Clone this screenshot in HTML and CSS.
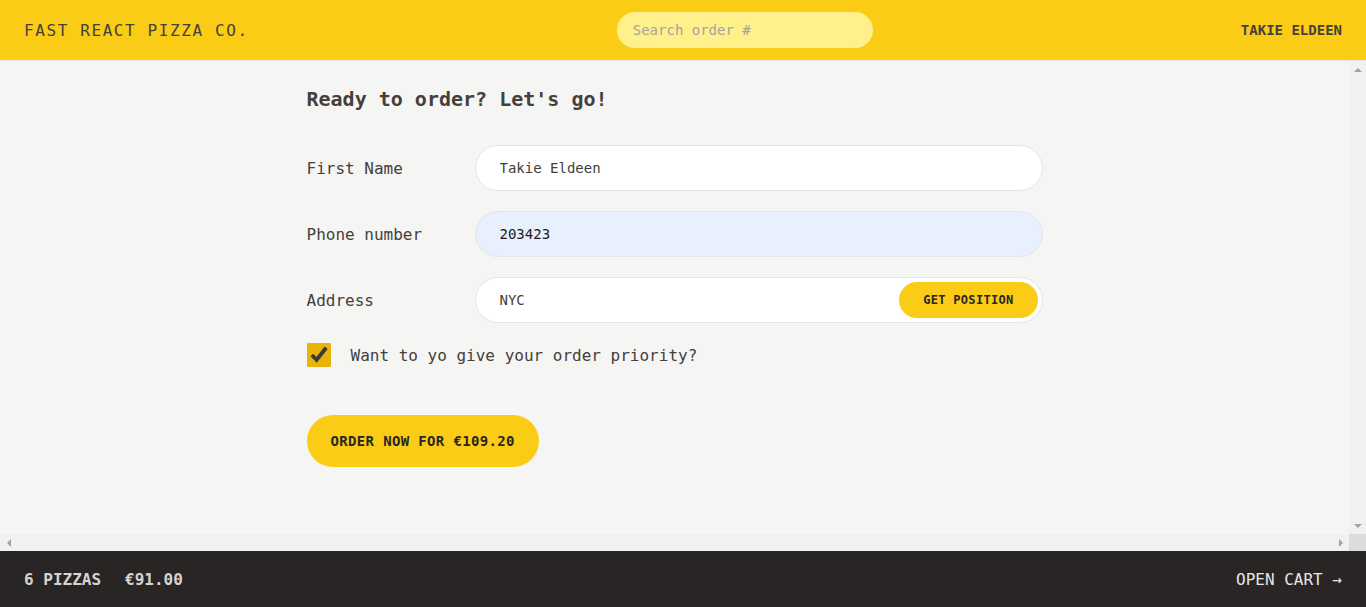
FILE: index.html
```html
<!DOCTYPE html>
<html lang="en">
<head>
<meta charset="utf-8">
<title>Fast React Pizza Co.</title>
<link rel="stylesheet" href="styles.css">
</head>
<body>
<div class="app">
  <header class="header">
    <a class="logo" href="#">Fast React Pizza Co.</a>
    <form class="search-form">
      <input class="search" type="text" placeholder="Search order #">
    </form>
    <div class="username">Takie Eldeen</div>
  </header>

  <div class="viewport">
    <main class="main">
      <div class="container">
        <div class="page">
          <h2 class="title">Ready to order? Let's go!</h2>
          <form class="order-form">
            <div class="row">
              <label class="label">First Name</label>
              <input class="input" type="text" value="Takie Eldeen">
            </div>
            <div class="row">
              <label class="label">Phone number</label>
              <input class="input input-autofill" type="tel" value="203423">
            </div>
            <div class="row">
              <label class="label">Address</label>
              <div class="field">
                <input class="input" type="text" value="NYC">
                <button type="button" class="btn btn-small">Get Position</button>
              </div>
            </div>
            <div class="check-row">
              <input class="checkbox" type="checkbox" id="priority" checked>
              <label class="check-label" for="priority">Want to yo give your order priority?</label>
            </div>
            <button type="button" class="btn btn-primary">Order now for €109.20</button>
          </form>
        </div>
      </div>
    </main>
    <div class="vbar" aria-hidden="true">
      <span class="sb-btn"><span class="arrow arrow-up"></span></span>
      <span class="sb-btn"><span class="arrow arrow-down"></span></span>
    </div>
    <div class="hbar" aria-hidden="true">
      <span class="sb-btn"><span class="arrow arrow-left"></span></span>
      <span class="sb-btn"><span class="arrow arrow-right"></span></span>
    </div>
    <div class="corner" aria-hidden="true"></div>
  </div>

  <footer class="cart-bar">
    <p class="cart-summary">
      <span class="cart-count">6 pizzas</span>
      <span class="cart-price">€91.00</span>
    </p>
    <a class="cart-link" href="#">Open cart &rarr;</a>
  </footer>
</div>
</body>
</html>
```

FILE: styles.css
```css
* { box-sizing: border-box; margin: 0; padding: 0; }

html, body { height: 100%; }

body {
  font-family: "DejaVu Sans Mono", "Liberation Mono", monospace;
  color: #44403c;
  background: #f5f5f4;
}

.app {
  display: grid;
  grid-template-rows: auto 1fr auto;
  height: 100vh;
}

/* Header */
.header {
  display: flex;
  align-items: center;
  justify-content: space-between;
  background: #facc15;
  border-bottom: 1px solid #e7e5e4;
  padding: 12px 24px;
  height: 61px;
}

.logo {
  color: #44403c;
  text-decoration: none;
  text-transform: uppercase;
  letter-spacing: 0.1em;
  font-size: 16px;
  line-height: 24px;
  padding-top: 2px;
}

.search {
  width: 256px;
  height: 36px;
  border: none;
  border-radius: 9999px;
  background: #fef08a;
  padding: 8px 16px;
  font-family: inherit;
  font-size: 14px;
  line-height: 20px;
  color: #44403c;
  outline: none;
}
.search::placeholder { color: #a8a29e; }

.username {
  font-size: 14px;
  line-height: 20px;
  font-weight: 600;
  text-transform: uppercase;
  color: #44403c;
}

/* Scroll viewport with classic scrollbars */
.viewport {
  display: grid;
  grid-template-columns: 1fr 17px;
  grid-template-rows: 1fr 17px;
  min-height: 0;
}

.main {
  overflow: hidden;
  min-height: 0;
}

.vbar,
.hbar {
  display: flex;
  justify-content: space-between;
  background: #f1f1f1;
}
.vbar { flex-direction: column; }

.sb-btn {
  display: flex;
  align-items: center;
  justify-content: center;
  width: 17px;
  height: 17px;
}

.arrow {
  width: 0;
  height: 0;
  border: 4px solid transparent;
}
.arrow-up { border-bottom-color: #a3a3a3; border-top-width: 0; }
.arrow-down { border-top-color: #a3a3a3; border-bottom-width: 0; }
.arrow-left { border-right-color: #a3a3a3; border-left-width: 0; }
.arrow-right { border-left-color: #a3a3a3; border-right-width: 0; }

.corner { background: #dcdcdc; }

.container {
  max-width: 768px;
  margin: 0 auto;
}

.page {
  padding: 24px 16px;
}

.title {
  font-size: 20px;
  line-height: 28px;
  font-weight: 600;
  margin-bottom: 32px;
}

.row {
  display: flex;
  align-items: center;
  gap: 8px;
  margin-bottom: 20px;
}

.label {
  flex: 0 0 160px;
  font-size: 16px;
  line-height: 24px;
  padding-top: 1px;
}

.input {
  flex: 1 1 auto;
  width: 100%;
  height: 46px;
  border: 1px solid #e7e5e4;
  border-radius: 9999px;
  background: #fff;
  padding: 12px 24px;
  font-family: inherit;
  font-size: 14px;
  line-height: 20px;
  color: #44403c;
  outline: none;
}

.input-autofill {
  background: #e8f0fe;
  color: #1c1917;
}

.field {
  position: relative;
  flex: 1 1 auto;
  display: flex;
}

.btn {
  display: inline-block;
  border: none;
  border-radius: 9999px;
  background: #facc15;
  color: #292524;
  font-family: inherit;
  font-weight: 600;
  text-transform: uppercase;
  letter-spacing: 0.025em;
  cursor: pointer;
}

.btn-small {
  position: absolute;
  top: 5px;
  right: 5px;
  height: 36px;
  padding: 10px 24px;
  font-size: 12px;
  line-height: 16px;
}

.check-row {
  display: flex;
  align-items: center;
  gap: 20px;
  height: 24px;
  margin-bottom: 48px;
}

.checkbox {
  width: 24px;
  height: 24px;
  margin: 0;
  accent-color: #eab308;
}

.check-label {
  font-size: 16px;
  line-height: 24px;
  font-weight: 500;
  padding-top: 1px;
}

.btn-primary {
  height: 52px;
  padding: 16px 24px;
  font-size: 14px;
  line-height: 20px;
}

/* Footer */
.cart-bar {
  display: flex;
  align-items: center;
  justify-content: space-between;
  height: 56px;
  background: #292524;
  color: #e7e5e4;
  padding: 16px 24px;
  text-transform: uppercase;
  font-size: 16px;
  line-height: 24px;
}

.cart-summary {
  display: flex;
  gap: 24px;
  font-weight: 600;
  color: #d6d3d1;
  padding-top: 2px;
}

.cart-link {
  color: #e7e5e4;
  text-decoration: none;
  padding-top: 2px;
}
```
